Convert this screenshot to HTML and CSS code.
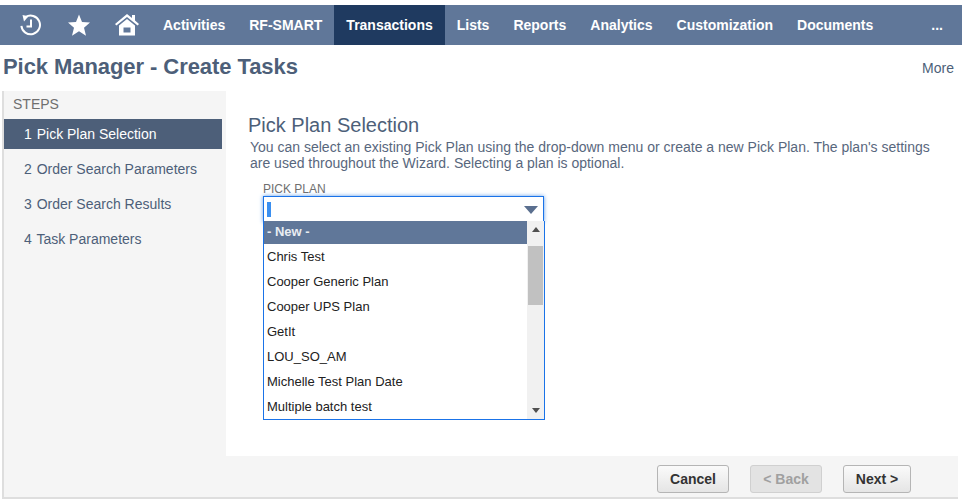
FILE: index.html
```html
<!DOCTYPE html>
<html lang="en">
  <head>
    <meta charset="UTF-8" />
    <title>Pick Manager - Create Tasks</title>
    <link rel="stylesheet" href="styles.css">
  </head>
  <body>
    <!-- top navigation -->
    <div class="nav">
      <div class="nav-icons">
        <svg class="icon-recent" width="22" height="22" viewBox="0 0 22 22" fill="none" stroke="#fff" stroke-width="2">
          <path d="M5.5 3.2 A9.3 9.3 0 1 1 1.4 11.8" />
          <path d="M2.5 1 L8.5 2.2 L4 7.5 Z" fill="#fff" stroke="none" />
          <path d="M11 5.5 V12.5 H6.5" />
        </svg>
        <svg class="icon-star" width="24" height="24" viewBox="0 0 24 24" fill="#fff">
          <path d="M12 1.5 L15 9 L23 9.5 L17 14.7 L19 22.7 L12 18.3 L5 22.7 L7 14.7 L1 9.5 L9 9 Z" />
        </svg>
        <svg class="icon-home" width="24" height="22" viewBox="0 0 24 22" fill="#fff">
          <path d="M12 0 L17 4 V1 H20 V6.5 L24 10 L22.6 11.5 L12 3 L1.4 11.5 L0 10 Z" />
          <path d="M4 11.5 L12 5 L20 11.5 V21.5 H4 Z M8.5 13.5 V18.5 H15.5 V13.5 Z" fill-rule="evenodd" />
        </svg>
      </div>
      <a class="nav-item" href="#">Activities</a>
      <a class="nav-item" href="#">RF-SMART</a>
      <a class="nav-item active" href="#">Transactions</a>
      <a class="nav-item" href="#">Lists</a>
      <a class="nav-item" href="#">Reports</a>
      <a class="nav-item" href="#">Analytics</a>
      <a class="nav-item" href="#">Customization</a>
      <a class="nav-item" href="#">Documents</a>
      <a class="nav-item nav-more" href="#">...</a>
    </div>

    <div class="title-row">
      <h1>Pick Manager - Create Tasks</h1>
      <span class="more">More</span>
    </div>

    <div class="wizard">
      <div class="wizard-main">
        <div class="steps">
          <div class="steps-label">STEPS</div>
          <div class="step selected"><span class="step-num">1</span> Pick Plan Selection</div>
          <div class="step"><span class="step-num">2</span> Order Search Parameters</div>
          <div class="step"><span class="step-num">3</span> Order Search Results</div>
          <div class="step"><span class="step-num">4</span> Task Parameters</div>
        </div>

        <div class="content">
          <h2>Pick Plan Selection</h2>
          <p>You can select an existing Pick Plan using the drop-down menu or create a new Pick Plan. The plan's settings are used throughout the Wizard. Selecting a plan is optional.</p>
          <div class="field">
            <label>PICK PLAN</label>
            <div class="select-box">
              <span class="caret"></span>
              <span class="select-arrow"></span>
            </div>
            <!-- open dropdown sits over the page -->
            <div class="dropdown">
              <ul class="options">
                <li class="current">- New -</li>
                <li>Chris Test</li>
                <li>Cooper Generic Plan</li>
                <li>Cooper UPS Plan</li>
                <li>GetIt</li>
                <li>LOU_SO_AM</li>
                <li>Michelle Test Plan Date</li>
                <li>Multiple batch test</li>
              </ul>
              <div class="scrollbar">
                <span class="scroll-up"></span>
                <span class="scroll-thumb"></span>
                <span class="scroll-down"></span>
              </div>
            </div>
          </div>
        </div>
      </div>

      <div class="footer">
        <button class="btn">Cancel</button>
        <button class="btn btn-disabled">&lt; Back</button>
        <button class="btn btn-next">Next &gt;</button>
      </div>
    </div>
  </body>
</html>
```

FILE: styles.css
```css
* {
  box-sizing: border-box;
  margin: 0;
  padding: 0;
  list-style: none;
}
html, body {
  height: 499px;
  overflow: hidden;
}
body {
  background-color: #fff;
  font-family: "Liberation Sans", Arial, sans-serif;
  padding-top: 5px;
}

/* navigation */
.nav {
  display: flex;
  height: 40px;
  background-color: #607799;
}
.nav-icons {
  display: flex;
  align-items: center;
  width: 151px;
  flex: none;
}
.icon-recent {
  margin-left: 20px;
}
.icon-star {
  margin-left: 25px;
}
.icon-home {
  margin-left: 24px;
}
.nav-item {
  display: flex;
  align-items: center;
  padding: 0 12px;
  color: #fff;
  font-size: 14px;
  font-weight: bold;
  text-decoration: none;
}
.nav-item.active {
  background-color: #1f3a60;
}
.nav-more {
  margin-left: auto;
  padding: 0 19px 0 0;
}

/* page title */
.title-row {
  display: flex;
  justify-content: space-between;
  align-items: center;
  height: 46px;
  padding: 0 8px 0 3px;
}
h1 {
  margin-bottom: 2px;
  color: #4d5f79;
  font-size: 22px;
  font-weight: bold;
  letter-spacing: -0.07px;
}
.more {
  color: #4d5f79;
  font-size: 14px;
}

/* wizard */
.wizard {
  display: flex;
  flex-direction: column;
  margin-left: 2px;
  width: 956px;
  height: 408px;
  border-left: 2px solid #dedede;
  border-bottom: 2px solid #dedede;
  background-color: #f5f5f5;
}
.wizard-main {
  display: flex;
  height: 365px;
}
.steps {
  width: 222px;
  flex: none;
}
.steps-label {
  height: 28px;
  padding: 5px 0 0 9px;
  color: #6f6f6f;
  font-size: 14px;
}
.step {
  height: 30px;
  width: 218px;
  margin-bottom: 5px;
  padding-left: 20px;
  color: #4d5f79;
  font-size: 14px;
  line-height: 30px;
}
.step-num {
  margin-right: 1px;
}
.step.selected {
  background-color: #4d5f79;
  color: #fff;
}
.content {
  flex: 1;
  background-color: #fff;
  padding: 23px 22px 0;
}
h2 {
  color: #4d5f79;
  font-size: 20px;
  font-weight: normal;
  line-height: 22px;
}
.content p {
  margin: 3px 0 0 2px;
  color: #58677d;
  font-size: 14px;
  line-height: 16px;
  width: 690px;
}

/* field and dropdown */
.field {
  position: relative;
  width: 282px;
  margin: 12px 0 0 15px;
}
.field label {
  display: block;
  color: #6f6f6f;
  font-size: 12px;
  line-height: 13px;
}
.select-box {
  display: flex;
  align-items: center;
  justify-content: space-between;
  width: 281px;
  height: 26px;
  padding: 0 5px 0 3px;
  background-color: #fff;
  border: 1px solid #1a73e8;
  box-shadow: 0 0 4px #5b9be8;
}
.caret {
  width: 4px;
  height: 15px;
  background-color: #3a8ff0;
}
.select-arrow {
  margin-top: 2px;
  border-left: 7px solid transparent;
  border-right: 7px solid transparent;
  border-top: 8px solid #5a6f8f;
}
.dropdown {
  position: absolute;
  top: 38px;
  left: 0;
  display: flex;
  width: 282px;
  height: 199px;
  background-color: #fff;
  border: 1px solid #1a73e8;
  border-top: 0;
}
.options {
  flex: 1;
  overflow: hidden;
}
.options li {
  height: 25px;
  padding-left: 3px;
  color: #222;
  font-size: 13px;
  line-height: 25px;
}
.options li.current {
  height: 23px;
  line-height: 22px;
  background-color: #607799;
  color: #e8ecf2;
  font-weight: bold;
}
.scrollbar {
  display: flex;
  flex-direction: column;
  align-items: center;
  width: 17px;
  flex: none;
  background-color: #f1f1f1;
}
.scroll-up {
  margin-top: 6px;
  border-left: 4px solid transparent;
  border-right: 4px solid transparent;
  border-bottom: 5px solid #505050;
}
.scroll-thumb {
  width: 15px;
  height: 59px;
  margin-top: 14px;
  background-color: #c1c1c1;
}
.scroll-down {
  margin-top: auto;
  margin-bottom: 6px;
  border-left: 4px solid transparent;
  border-right: 4px solid transparent;
  border-top: 5px solid #505050;
}

/* footer buttons */
.footer {
  display: flex;
  align-items: flex-start;
  padding: 9px 0 0 653px;
}
.btn {
  width: 72px;
  height: 28px;
  margin-right: 21px;
  border: 1px solid #b5b5b5;
  border-radius: 3px;
  background-color: #f0f0f0;
  background-image: linear-gradient(#fafafa, #e5e5e5);
  color: #333;
  font-family: "Liberation Sans", Arial, sans-serif;
  font-size: 14px;
  font-weight: bold;
}
.btn-disabled {
  background-image: none;
  background-color: #e3e3e3;
  border-color: #d0d0d0;
  color: #a0a0a0;
}
.btn-next {
  width: 68px;
}
```
